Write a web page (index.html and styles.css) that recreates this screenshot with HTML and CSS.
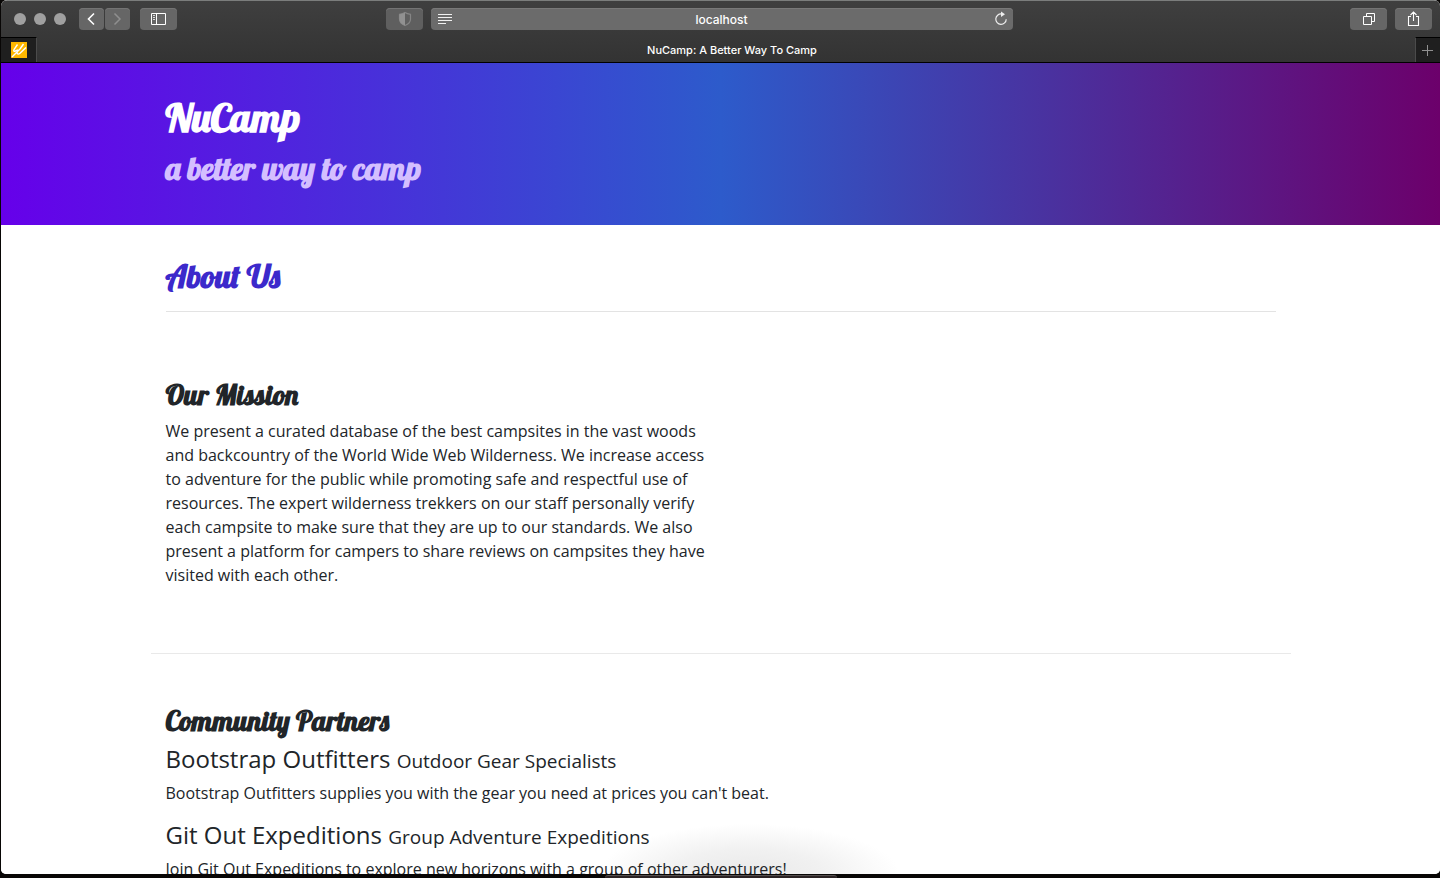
FILE: index.html
```html
<!DOCTYPE html>
<html lang="en">
<head>
<meta charset="utf-8">
<meta name="viewport" content="width=device-width, initial-scale=1">
<title>NuCamp: A Better Way To Camp</title>
<link rel="stylesheet" href="styles.css">
</head>
<body>
<div class="window">
  <div class="chrome">
    <div class="toolbar">
      <div class="toolbar-side">
        <div class="lights"><span class="light"></span><span class="light"></span><span class="light"></span></div>
        <div class="history">
          <button class="tool tool-small" aria-label="Back"><svg width="25" height="22" viewBox="0 0 25 22"><path d="M15 5.500 9.500 11 15 16.500" stroke="#fff" stroke-width="1.600"/></svg></button>
          <button class="tool tool-small" aria-label="Forward"><svg width="25" height="22" viewBox="0 0 25 22"><path d="M9.500 5.500 15 11 9.500 16.500" stroke="#8f8f8f" stroke-width="1.500"/></svg></button>
        </div>
        <button class="tool" aria-label="Sidebar"><svg width="37" height="22" viewBox="0 0 37 22"><path d="M11.500 5.500h14v11h-14zM16.500 5.500v11" stroke="#fff"/><path d="M13 7.500h2M13 9.500h2M13 11.500h2" stroke="#ddd"/></svg></button>
      </div>
      <div class="toolbar-center">
        <button class="tool tool-dim" aria-label="Privacy report"><svg width="37" height="22" viewBox="0 0 37 22"><path d="M19 4.500c2 1.200 3.500 1.500 5.500 1.800v5c0 2.800-2 4.900-5.500 6.200-3.500-1.300-5.500-3.400-5.500-6.200v-5c2-.3 3.500-.6 5.500-1.800z" stroke="#858585" stroke-width="1.200"/><path d="M19 4.500v13c-3.500-1.300-5.500-3.400-5.500-6.200v-5c2-.3 3.500-.6 5.500-1.800z" fill="#919191"/></svg></button>
        <div class="address">
          <svg width="24" height="22" viewBox="0 0 24 22"><path d="M7 6.500h14M7 9.500h14M7 12.500h14M7 15.500h8" stroke="#f0f0f0"/></svg>
          <input class="address-input" type="text" value="localhost" aria-label="Address">
          <button class="reload" aria-label="Reload"><svg width="24" height="22" viewBox="0 0 24 22"><path d="M12.500 6A5.200 5.200 0 1 0 17.200 11.200" stroke="#eee" stroke-width="1.200"/><path d="M12 3.500 16 6.300 12 9z" fill="#eee"/></svg></button>
        </div>
      </div>
      <div class="toolbar-side toolbar-end">
        <button class="tool" aria-label="Tab overview"><svg width="37" height="22" viewBox="0 0 37 22"><path d="M13.500 8.500h8v8h-8zM16.500 8.500v-3h8v8h-3" stroke="#fff"/></svg></button>
        <button class="tool" aria-label="Share"><svg width="37" height="22" viewBox="0 0 37 22"><path d="M16 8.500h-2.500v9h10v-9H21M18.500 13V4M15.500 7l3-3 3 3" stroke="#fff" stroke-width="1.100"/></svg></button>
      </div>
    </div>
    <div class="tabs">
      <button class="pinned" aria-label="Pinned tab"><svg width="16" height="16" viewBox="0 0 16 16"><path fill="#ffb800" d="M0 0h16v16H0z"/><path d="M1 15 9 7M9 7l3.500-5M6.500 2.500 3 7.500c-.8 1.500.2 2.300 1.600 1.400L7 8M6 10.500c.3 2 1.500 2 3 .8L15 5.500" stroke="#fff" stroke-width="1.400"/></svg></button>
      <div class="tab-title">NuCamp: A Better Way To Camp</div>
      <button class="new-tab" aria-label="New tab"><svg width="24" height="24" viewBox="0 0 24 24"><path d="M6 12.500h11M11.500 7v11" stroke="#909090"/></svg></button>
    </div>
  </div>
  <div class="page">
    <header class="hero">
      <div class="container">
        <h1 class="script hero-title">NuCamp</h1>
        <h2 class="script hero-tagline">a better way to camp</h2>
      </div>
    </header>
    <main class="container">
      <div class="page-title">
        <h2 class="script about">About Us</h2>
      </div>
      <section class="section mission">
        <h3 class="script heading">Our Mission</h3>
        <p class="text">We present a curated database of the best campsites in the vast woods and backcountry of the World Wide Web Wilderness. We increase access to adventure for the public while promoting safe and respectful use of resources. The expert wilderness trekkers on our staff personally verify each campsite to make sure that they are up to our standards. We also present a platform for campers to share reviews on campsites they have visited with each other.</p>
      </section>
      <section class="section partners">
        <h3 class="script heading">Community Partners</h3>
        <h4 class="partner">Bootstrap Outfitters <small class="partner-kind">Outdoor Gear Specialists</small></h4>
        <p class="text">Bootstrap Outfitters supplies you with the gear you need at prices you can't beat.</p>
        <h4 class="partner">Git Out Expeditions <small class="partner-kind">Group Adventure Expeditions</small></h4>
        <p class="text">Join Git Out Expeditions to explore new horizons with a group of other adventurers!</p>
      </section>
    </main>
  </div>
</div>
<div class="behind"></div>
</body>
</html>
```
FILE: styles.css
```css
* { box-sizing: border-box; }
body {
  margin: 0;
  height: 100vh;
  padding-left: 1px;
  display: flex;
  flex-direction: column;
  background: #080605;
  color: #212529;
  font-family: "Open Sans", sans-serif;
}
svg { display: block; fill: none; }
button { border: 0; padding: 0; background: none; }
.window {
  flex: 1;
  min-height: 0;
  display: flex;
  flex-direction: column;
  overflow: hidden;
  border-radius: 6px 6px 5px 5px;
  background: #fff;
}
.behind {
  width: 232px;
  height: 3px;
  margin: 1px auto 0;
  border-top: 1px solid #55504f;
  border-radius: 4px 4px 0 0;
  background: #2b2324;
}
.chrome {
  flex: none;
  border-top: 1px solid #7b7d7c;
  border-bottom: 1px solid #000;
  background: linear-gradient(#3f3f3f, #333);
  color: #fff;
  font-family: Inter, sans-serif;
}
.toolbar {
  height: 36px;
  padding: 0 8px 0 13px;
  display: flex;
  align-items: center;
}
.toolbar-side {
  flex: 1;
  display: flex;
  align-items: center;
  gap: 10px;
}
.toolbar-end { justify-content: flex-end; gap: 8px; }
.lights { display: flex; gap: 8px; margin-right: 3px; }
.light { width: 12px; height: 12px; border-radius: 50%; background: #a0a0a0; }
.history { display: flex; gap: 1px; }
.tool {
  width: 37px;
  height: 22px;
  border-radius: 4px;
  background: #666;
  box-shadow: inset 0 1px #747474;
}
.tool-small { width: 25px; }
.tool-dim { background: #5f5f5f; }
.toolbar-center {
  width: 45%;
  max-width: 627px;
  margin-right: 48px;
  display: flex;
  gap: 8px;
}
.address {
  flex: 1;
  height: 22px;
  display: flex;
  border-radius: 4px;
  background: #6b6b6b;
  box-shadow: inset 0 1px #797979;
}
.address-input {
  flex: 1;
  min-width: 0;
  padding: 1px 0 0;
  border: 0;
  background: none;
  color: #fff;
  font: 500 12px/21px Inter, sans-serif;
  text-align: center;
}
.tabs { height: 25px; display: flex; }
.pinned, .new-tab {
  display: flex;
  justify-content: center;
  align-items: center;
  border-top: 1px solid #000;
  background: #1f1f1f;
}
.pinned { width: 36px; border-right: 1px solid #4b4b4b; }
.new-tab { width: 25px; border-left: 1px solid #4b4b4b; }
.tab-title {
  flex: 1;
  padding: 1px 0 0 12px;
  font-size: 11px;
  font-weight: 500;
  line-height: 25px;
  text-align: center;
}
.page {
  flex: 1;
  min-height: 0;
  overflow: hidden;
  background: radial-gradient(ellipse 150px 50px at 52% 100%, #e9e9e9, #f1f1f1 50%, #fff);
}
.hero {
  padding: 30px 0;
  background: linear-gradient(to right, #6600ea, #2d5bcb 50%, #6c006b);
}
.container { max-width: 1140px; margin: 0 auto; padding: 0 15px; }
.script {
  margin: 0;
  font-family: Lobster, "Liberation Serif", serif;
  font-weight: 700;
}
.hero-title { color: #fff; font-size: 40px; line-height: 48px; }
.hero-tagline {
  margin: 8px 0;
  color: #d4bfff;
  font-size: 32px;
  line-height: 38px;
}
.page-title { padding: 32px 0 16px; border-bottom: 1px solid #e3e3e3; }
.about { color: #3c29cb; font-size: 32px; line-height: 38px; }
.section { margin: 0 -15px; padding: 50px 15px; }
.mission { padding: 66px 15px; border-bottom: 1px solid #e9e9e9; }
.heading { margin-bottom: 8px; font-size: 28px; line-height: 33px; }
.mission .text { max-width: 542px; margin-bottom: 0; }
.text { margin: 0 0 16px; font-size: 16px; line-height: 24px; }
.partner { margin: 0 0 6px; font-size: 24px; font-weight: 400; line-height: 28px; }
.partner-kind { font-size: 19px; }
```
